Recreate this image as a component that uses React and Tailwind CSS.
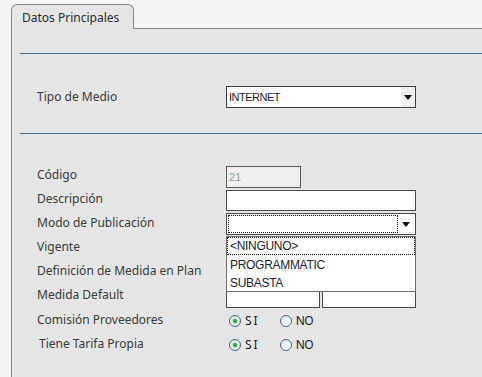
import React from 'react';

const labelFont = { fontFamily: '"Noto Sans", "Open Sans", sans-serif' };

function Arrow() {
  return (
    <svg width="8" height="5" viewBox="0 0 8 5" className="block">
      <path d="M0 0 L8 0 L4 5 Z" fill="#111" />
    </svg>
  );
}

function Radio({ checked, label, spaced }) {
  return (
    <span className="flex items-center">
      <span className="relative grid h-[12px] w-[12px] place-items-center rounded-full border border-[#3e6287] bg-gradient-to-br from-[#dde3ea] to-white">
        {checked && <span className="h-[4px] w-[4px] rounded-full bg-[#2aa336] shadow-[0_0_0_1px_#bfe6c2]" />}
      </span>
      <span
        className={`ml-[4px] text-[12px] leading-none text-[#1b1b1b] ${spaced ? 'tracking-[2px]' : 'tracking-[-0.5px]'}`}
        style={labelFont}
      >
        {label}
      </span>
    </span>
  );
}

function Row({ label, children, labelClass = 'pt-[1px]' }) {
  return (
    <div className="flex h-[24px] items-start">
      <div className={`w-[189px] shrink-0 text-[12px] leading-[24px] text-[#3a3a3a] ${labelClass}`} style={labelFont}>
        {label}
      </div>
      {children}
    </div>
  );
}

export default function App() {
  return (
    <div className="flex min-h-[377px] h-screen flex-col overflow-hidden bg-[#f4f4f4] pl-[11px] pt-[4px]">
      <div className="flex h-[25px] shrink-0">
        <div
          className="w-[123px] rounded-t-[6px] border border-b-0 border-[#7b8a93] bg-[#e5e5e5] pl-[10px] text-[12px] leading-[26px] text-[#2c2c2c]"
          style={labelFont}
        >
          Datos Principales
        </div>
        <div className="flex-1 border-b border-[#7b8a93]" />
      </div>

      <div className="flex-1 border-l border-[#7b8a93] bg-[#e5e5e5] pl-[8px]">
        <div className="mt-[24px] h-px bg-[#2f6ea5]" />

        <div className="mt-[32px] flex h-[22px] items-center pl-[17px]">
          <div className="w-[189px] shrink-0 text-[12px] text-[#3a3a3a]" style={labelFont}>
            Tipo de Medio
          </div>
          <div className="flex h-[22px] w-[190px] items-stretch border border-[#404040] bg-white">
            <span
              className="flex-1 pl-[2px] text-[11px] leading-[21px] tracking-[-0.5px] text-[#1e2233]"
              style={{ fontFamily: '"Liberation Sans", Arial, sans-serif' }}
            >
              INTERNET
            </span>
            <span className="grid w-[14px] place-items-center bg-[#efefef]">
              <Arrow />
            </span>
          </div>
        </div>

        <div className="mt-[25px] h-px bg-[#2f6ea5]" />

        <div className="relative mt-[28px] pl-[17px]">
          <Row label="Código">
            <div
              className="mt-[4px] h-[22px] w-[75px] border border-[#5a5a5a] bg-[#efefef] pl-[2px] text-[11px] leading-[20px] text-[#9a9a9a]"
              style={{ fontFamily: '"Liberation Sans", Arial, sans-serif' }}
            >
              21
            </div>
          </Row>
          <Row label="Descripción">
            <div className="mt-[4px] h-[21px] w-[190px] border border-[#4a4a4a] bg-white" />
          </Row>
          <Row label="Modo de Publicación">
            <div className="mt-[3px] flex h-[22px] w-[190px] border border-[#4a4a4a] bg-white p-[1px]">
              <span className="flex-1 border border-dotted border-[#111]" />
              <span className="grid w-[16px] place-items-center">
                <Arrow />
              </span>
            </div>
          </Row>
          <Row label="Vigente" />
          <Row label="Definición de Medida en Plan" />
          <Row label="Medida Default">
            <div className="mt-[6px] flex gap-[2px]">
              <div className="h-[20px] w-[94px] border border-[#4a4a4a] bg-white" />
              <div className="h-[20px] w-[94px] border border-[#4a4a4a] bg-white" />
            </div>
          </Row>
          <Row label="Comisión Proveedores" labelClass="pt-[2px]">
            <div className="mt-[3px] flex h-[24px] items-center gap-[20px] pl-[3px]">
              <Radio checked spaced label="SI" />
              <Radio label="NO" />
            </div>
          </Row>
          <Row label="Tiene Tarifa Propia" labelClass="pt-[2px] pl-[2px]">
            <div className="mt-[3px] flex h-[24px] items-center gap-[20px] pl-[3px]">
              <Radio checked spaced label="SI" />
              <Radio label="NO" />
            </div>
          </Row>

          <div
            className="absolute left-[206px] top-[74px] w-[190px] border border-[#6f6f6f] bg-white text-[12px] leading-[18px] tracking-[-0.3px] text-[#1e2233]"
            style={{ fontFamily: '"Liberation Sans", Arial, sans-serif' }}
          >
            <div className="h-[18px] border border-dotted border-[#111] pl-[2px] leading-[17px]">&lt;NINGUNO&gt;</div>
            <div className="h-[19px] pl-[3px] leading-[20px]">PROGRAMMATIC</div>
            <div className="h-[17px] pl-[3px] leading-[18px]">SUBASTA</div>
          </div>
        </div>
      </div>
    </div>
  );
}
